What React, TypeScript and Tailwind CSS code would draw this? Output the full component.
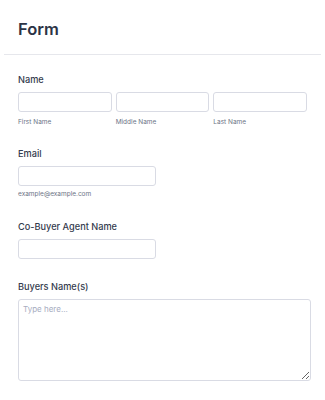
import React from "react";

function Label({ children, className = "" }: { children: React.ReactNode; className?: string }) {
  return (
    <div className={`text-[9.2px] leading-[12px] font-medium text-[#343b4d] ${className}`}>{children}</div>
  );
}

function Sub({ children, className = "" }: { children: React.ReactNode; className?: string }) {
  return <div className={`text-[6.5px] leading-[9px] text-[#6c7486] ${className}`}>{children}</div>;
}

const inputCls =
  "block h-[20px] rounded-[3px] border border-[#d9dbe4] bg-white outline-none";

export default function App() {
  return (
    <div className="w-[325px] h-[400px] bg-white overflow-hidden" style={{ fontFamily: "Inter, 'Noto Sans', sans-serif" }}>
      <div className="mx-[4px] px-[14px] pt-[19px] pb-[15px] border-b border-[#e6e7ec]">
        <h1 className="text-[16.5px] leading-[20px] font-semibold text-[#2c3345]">Form</h1>
      </div>
      <div className="px-[18px]">
        <Label className="mt-[19px]">Name</Label>
        <div className="mt-[6px] flex gap-[4px] w-[289px]">
          <div className="flex-1 min-w-0">
            <input className={`${inputCls} w-full`} />
            <Sub className="mt-[5.5px]">First Name</Sub>
          </div>
          <div className="flex-1 min-w-0">
            <input className={`${inputCls} w-full`} />
            <Sub className="mt-[5.5px]">Middle Name</Sub>
          </div>
          <div className="flex-1 min-w-0">
            <input className={`${inputCls} w-full`} />
            <Sub className="mt-[5.5px]">Last Name</Sub>
          </div>
        </div>

        <Label className="mt-[21px]">Email</Label>
        <input className={`${inputCls} mt-[6px] w-[138px]`} />
        <Sub className="mt-[4.5px]">example@example.com</Sub>

        <Label className="mt-[22px]">Co-Buyer Agent Name</Label>
        <input className={`${inputCls} mt-[5.5px] w-[138px]`} />

        <Label className="mt-[22.5px]">Buyers Name(s)</Label>
        <textarea
          placeholder="Type here..."
          className="block mt-[5.5px] w-[293px] h-[82px] rounded-[3px] border border-[#d9dbe4] bg-white outline-none px-[4px] py-[4px] text-[8px] leading-[11px] text-[#2c3345] placeholder:text-[#a7adbf]"
        />
      </div>
    </div>
  );
}
